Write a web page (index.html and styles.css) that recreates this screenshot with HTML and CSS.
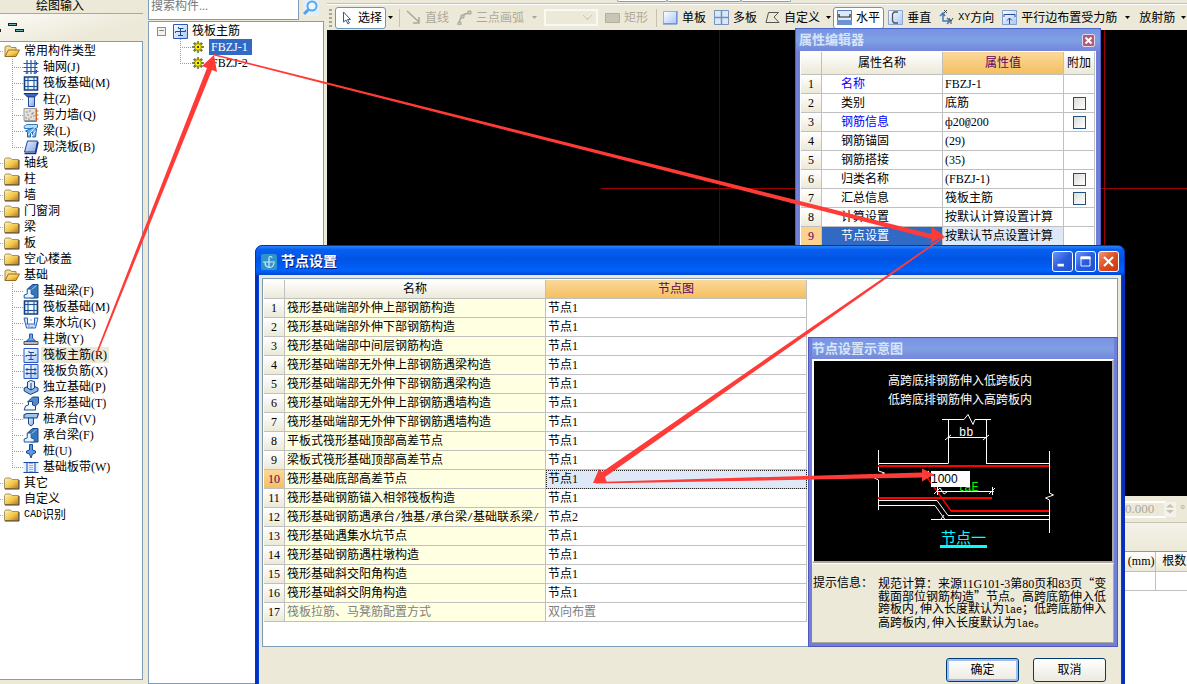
FILE: index.html
```html
<!DOCTYPE html>
<html lang="zh-CN">
<head>
<meta charset="utf-8">
<title>节点设置</title>
<link rel="stylesheet" href="styles.css">
</head>
<body>
<svg class="defs" aria-hidden="true">
  <defs>
    <linearGradient id="gold" x1="0" y1="0" x2="1" y2="1"><stop offset="0" stop-color="#fff3b0"/><stop offset=".55" stop-color="#f3c64a"/><stop offset="1" stop-color="#b87412"/></linearGradient>
    <linearGradient id="steel" x1="0" y1="0" x2="1" y2="1"><stop offset="0" stop-color="#e8f2ff"/><stop offset="1" stop-color="#7fa4e0"/></linearGradient>
    <linearGradient id="sky" x1="0" y1="0" x2="1" y2="1"><stop offset="0" stop-color="#fff"/><stop offset="1" stop-color="#a9c6f8"/></linearGradient>
  </defs>
  <symbol id="folder" viewBox="0 0 16 15"><path d="M.5 12.500V3.500L1.500 2h5l1.500 1.500h6.500v9z" fill="url(#gold)" stroke="#a5946a"/><path d="M1 13h14V4" fill="none" stroke="#493818"/></symbol>
  <symbol id="open" viewBox="0 0 16 15"><path d="M1 12.500V3l1-1h4l1.500 1.500H12V6" fill="#f6dc8c" stroke="#a08a50"/><path d="M1 12.500L4.500 6h11L12 12.500z" fill="url(#gold)" stroke="#9a6a18"/></symbol>
  <symbol id="grid" viewBox="0 0 15 15"><path d="M3.500 0v14M7.500 0v14M11.500 0v14M0 3.500h15M0 7.500h14M0 11.500h15" stroke="#2458a8" stroke-width="1.200"/><path d="M13 2v3M13 10v3M2 13h3M10 13h3" stroke="#2458a8"/></symbol>
  <symbol id="raft" viewBox="0 0 15 15"><path d="M1 1h13v13H1z" fill="#e3effc" stroke="#123f7c" stroke-width="1.600"/><path d="M4.500 1v13M10.500 1v13M1 4.500h13M1 10.500h13" stroke="#1d5392"/><path d="M6 6h3v3H6z" fill="#fff"/></symbol>
  <symbol id="column" viewBox="0 0 15 15"><path d="M.5 1.500h14L11 5H4z" fill="#3e67c4" stroke="#18337e"/><path d="M5 5h6v9.500H5z" fill="url(#steel)" stroke="#25489a"/></symbol>
  <symbol id="wall" viewBox="0 0 15 15"><path d="M.5.5h12v12H.5z" fill="#e4e0dc" stroke="#999"/><path d="M3 4h1M6 3h1M9 5h1M4 7h1M7 9h1M2 10h1M10 8h1M5 11h1M8 6h1" stroke="#444"/><path d="M13 .5v13H1M12 3h3M12 7h3M12 11h3" stroke="#c56b2d" fill="none"/></symbol>
  <symbol id="beam" viewBox="0 0 15 15"><path d="M.5 2.500L3 .500h11v3l-2 1H1z" fill="#b9dcf8" stroke="#2a7cc0"/><path d="M2 7l7-3 4 1-1 8H9V8l-2 1v4H4V8z" fill="#6fb4ea" stroke="#1d68b0"/><path d="M5 11l6-7M8 13l4-6" stroke="#e8f5ff"/></symbol>
  <symbol id="slab" viewBox="0 0 15 15"><path d="M4 1h10l-2 11H1z" fill="url(#steel)" stroke="#1f449c"/><path d="M1 13.500h11L14.500 2" fill="none" stroke="#1a3584" stroke-width="1.600"/></symbol>
  <symbol id="fbeam" viewBox="0 0 15 15"><path d="M4 5l5-4.500h5.500V14H7z" fill="#3677bc" stroke="#134684"/><path d="M.7 14v-3l3-1V5h4v5l3 1v3z" fill="#e6f2ff" stroke="#1d579a"/><path d="M8 5.500L13 1.500" stroke="#9ccaf3"/></symbol>
  <symbol id="strip" viewBox="0 0 15 15"><path d="M4 6l5-5h6v6l-3 3v3z" fill="#518bc9" stroke="#174b88"/><path d="M.7 14L2 10l3-1V5.500h4V9l3 1v4z" fill="#f4f9ff" stroke="#174b88"/></symbol>
  <symbol id="pit" viewBox="0 0 15 15"><path d="M.5 2h3.500v6h7V2h3.500L12 12H3z" fill="#d5e6fb" stroke="#2b62ba"/><path d="M3 8h1M5 10h1M8 11h1M11 9h1M7 4h1" stroke="#173f96"/></symbol>
  <symbol id="pier" viewBox="0 0 15 15"><path d="M6 2h3v4l3 3H3l3-3z" fill="#6ca5e8" stroke="#2559a6"/><path d="M.5 9.500h14v3H.5z" fill="#bbb" stroke="#555"/></symbol>
  <symbol id="main" viewBox="0 0 15 15"><path d="M.5.500h14v14H.5z" fill="url(#sky)" stroke="#2a58c0"/><path d="M2.500 9V7.500h10V6M7.500 7.500V12M5.500 3v1.500h5M7.500 4.500v3M5 11.500h5" fill="none" stroke="#174d9f"/></symbol>
  <symbol id="neg" viewBox="0 0 15 15"><path d="M.5.500h14v14H.5z" fill="url(#sky)" stroke="#2a58c0"/><path d="M7.500 1v13M2 5.500h11M2 9.500h11M3.500 4v3M11.500 4v3M3.500 8v3M11.500 8v3" stroke="#174d9f"/></symbol>
  <symbol id="iso" viewBox="0 0 15 15"><path d="M.7 8L8 5l6.500 3v3L7 14.500.7 11z" fill="#8ab4e4" stroke="#153f78"/><path d="M4 2l3-1.500 4 1V8L7.500 10 4 8z" fill="#d7e9fb" stroke="#173f78"/><path d="M7.500 3v7" stroke="#173f78"/></symbol>
  <symbol id="cap" viewBox="0 0 15 15"><path d="M.5 3L3 1.500h12L13.500 6H.5z" fill="#9fc6ed" stroke="#15508e" stroke-width="1.200"/><path d="M5 6h5v6l-2.500 2L5 12z" fill="url(#steel)" stroke="#15508e"/></symbol>
  <symbol id="pile" viewBox="0 0 15 15"><path d="M6 .500h3V6l3 1v2l-3 1-1.500 4L6 10 3 9V7l3-1z" fill="#6298d8" stroke="#164b91"/></symbol>
  <symbol id="band" viewBox="0 0 15 15"><path d="M0 2h15v11H0z" fill="#e5effd"/><path d="M0 2.500h15M0 12.500h15M3.500 3v9M11.500 3v9" stroke="#174aa0"/><path d="M6.500 3v9M8.500 3v9" stroke="#3e77d0" stroke-dasharray="1 1"/></symbol>
  <symbol id="gear" viewBox="0 0 12 12"><path d="M6 .5v11M.5 6h11M2 2l8 8M10 2l-8 8" stroke="#111" stroke-width="2.200"/><path d="M6 1v10M1 6h10M2.500 2.500l7 7M9.500 2.500l-7 7" stroke="#f5ef00" stroke-width="1.200"/><circle cx="6" cy="6" r="3.300" fill="#f7f000" stroke="#6a6400" stroke-width=".6"/><circle cx="6" cy="6" r="1" fill="#111"/></symbol>
  <symbol id="down" viewBox="0 0 5 3"><path d="M0 0h5L2.500 3z" fill="currentColor"/></symbol>
</svg>

<div class="app">
  <aside class="nav">
    <h2 class="nav-title">绘图输入</h2>
    <div class="nav-tools"><svg width="26" height="12" viewBox="0 0 26 12"><path d="M8 1h9v3H8zM15 7h9v3h-9zM-2 7h3v3h-3z" fill="#222"/><path d="M9 2h7v1H9zM16 8h7v1h-7z" fill="#63b8b5"/></svg></div>
    <ul class="tree">
      <li><svg><use href="#open"/></svg>常用构件类型</li>
      <li class="kid"><svg><use href="#grid"/></svg>轴网(J)</li>
      <li class="kid"><svg><use href="#raft"/></svg>筏板基础(M)</li>
      <li class="kid"><svg><use href="#column"/></svg>柱(Z)</li>
      <li class="kid"><svg><use href="#wall"/></svg>剪力墙(Q)</li>
      <li class="kid"><svg><use href="#beam"/></svg>梁(L)</li>
      <li class="kid last"><svg><use href="#slab"/></svg>现浇板(B)</li>
      <li><svg><use href="#folder"/></svg>轴线</li>
      <li><svg><use href="#folder"/></svg>柱</li>
      <li><svg><use href="#folder"/></svg>墙</li>
      <li><svg><use href="#folder"/></svg>门窗洞</li>
      <li><svg><use href="#folder"/></svg>梁</li>
      <li><svg><use href="#folder"/></svg>板</li>
      <li><svg><use href="#folder"/></svg>空心楼盖</li>
      <li><svg><use href="#open"/></svg>基础</li>
      <li class="kid"><svg><use href="#fbeam"/></svg>基础梁(F)</li>
      <li class="kid"><svg><use href="#raft"/></svg>筏板基础(M)</li>
      <li class="kid"><svg><use href="#pit"/></svg>集水坑(K)</li>
      <li class="kid"><svg><use href="#pier"/></svg>柱墩(Y)</li>
      <li class="kid"><svg><use href="#main"/></svg><span class="current">筏板主筋(R)</span></li>
      <li class="kid"><svg><use href="#neg"/></svg>筏板负筋(X)</li>
      <li class="kid"><svg><use href="#iso"/></svg>独立基础(P)</li>
      <li class="kid"><svg><use href="#strip"/></svg>条形基础(T)</li>
      <li class="kid"><svg><use href="#cap"/></svg>桩承台(V)</li>
      <li class="kid"><svg><use href="#fbeam"/></svg>承台梁(F)</li>
      <li class="kid"><svg><use href="#pile"/></svg>桩(U)</li>
      <li class="kid last"><svg><use href="#band"/></svg>基础板带(W)</li>
      <li><svg><use href="#folder"/></svg>其它</li>
      <li><svg><use href="#folder"/></svg>自定义</li>
      <li><svg><use href="#folder"/></svg><span class="half">CAD</span>识别</li>
    </ul>
  </aside>

  <section class="members">
    <div class="search">
      <input type="text" placeholder="搜索构件..." aria-label="搜索构件">
      <button type="button" aria-label="搜索"><svg width="16" height="16" viewBox="0 0 16 16"><path d="M6 9l-5 5" stroke="#5b9fe0" stroke-width="3"/><circle cx="9" cy="6" r="4.500" fill="#e8f6ff" stroke="#5aa7ea" stroke-width="2"/></svg></button>
    </div>
    <ul class="member-tree">
      <li><span class="minus">−</span><svg><use href="#main"/></svg>筏板主筋</li>
      <li class="leaf"><svg><use href="#gear"/></svg><span class="picked">FBZJ-1</span></li>
      <li class="leaf last"><svg><use href="#gear"/></svg><span>FBZJ-2</span></li>
    </ul>
  </section>

  <main class="work">
    <div class="upper-bar"><span></span><span></span><span></span></div>
    <div class="toolbar">
      <i class="grip"></i>
      <button type="button" class="on"><svg class="ic" viewBox="0 0 15 15"><path d="M4.500 2v10l2.500-2 2 4 1.500-1-2-3.500h3z" fill="#fff" stroke="#345a9a"/></svg>选择</button><svg class="dd"><use href="#down"/></svg>
      <i class="sep"></i>
      <button type="button" disabled><svg class="ic" viewBox="0 0 15 15"><path d="M1 1l12 11M13 7v6H7" fill="none" stroke="#aaa79a" stroke-width="1.500"/></svg>直线</button>
      <button type="button" disabled><svg class="ic" viewBox="0 0 15 15"><path d="M2 14C3 7 6 3 13 3" fill="none" stroke="#aaa79a" stroke-width="1.500"/><path d="M1 12h3v3H1zM4 5h3v3H4zM11 1h3v3h-3z" fill="#ccc9bb" stroke="#aaa79a"/></svg>三点画弧</button><svg class="dd off"><use href="#down"/></svg>
      <select disabled aria-label="画弧方式"><option></option></select>
      <button type="button" disabled><svg class="ic" viewBox="0 0 15 15"><path d="M.5 3.500h14v9H.5z" fill="#c8c5b5" stroke="#b3b0a2"/></svg>矩形</button>
      <i class="sep"></i>
      <button type="button"><svg class="ic" viewBox="0 0 15 15"><path d="M.5 1.500h13v12H.5z" fill="url(#sky)" stroke="#90b0ee"/><path d="M0 14h14V1" fill="none" stroke="#567cc8"/></svg>单板</button>
      <button type="button"><svg class="ic" viewBox="0 0 15 15"><path d="M.5.500h14v14H.5z" fill="#dbe8fa" stroke="#7794bf"/><path d="M7.500 1v13M1 7.500h13" stroke="#6f8fc0" stroke-width="1.500"/></svg>多板</button>
      <button type="button"><svg class="ic" viewBox="0 0 15 15"><path d="M1 12.500L3.500 2.500h10L9 7l5 5.500z" fill="none" stroke="#555"/></svg>自定义</button><svg class="dd"><use href="#down"/></svg>
      <button type="button" class="on"><svg class="ic" viewBox="0 0 15 15"><path d="M.5.500h14v14H.5z" fill="#dce9fb" stroke="#567db8"/><path d="M0 10h15v5H0z" fill="#6d93cf"/><path d="M2 4v3h11V4" fill="none" stroke="#222" stroke-width="1.200"/></svg>水平</button>
      <button type="button"><svg class="ic" viewBox="0 0 15 15"><path d="M.5.500h14v14H.5z" fill="url(#sky)" stroke="#8ba6cf"/><path d="M10 2H6L4.500 4v7L6 13h4" fill="none" stroke="#555" stroke-width="1.300"/></svg>垂直</button>
      <button type="button"><svg class="ic" viewBox="0 0 15 15"><path d="M4 4v7h7M1 6l3-3 2 3M8 8l3 3-3 3" fill="none" stroke="#4777c4" stroke-width="1.500"/><path d="M5 0l3 3M8 0L5 3M10 8l2 3 2-3M12 11v3" stroke="#444" fill="none"/></svg><span class="half">XY</span>方向</button>
      <button type="button"><svg class="ic" viewBox="0 0 15 15"><path d="M.5.500h14v14H.5z" fill="url(#sky)" stroke="#83a1d2"/><path d="M2 7V4.500h11V7M7.500 14V8M5 10.500L7.500 8l2.500 2.500" fill="none" stroke="#284c91"/></svg>平行边布置受力筋</button><svg class="dd wide"><use href="#down"/></svg>
      <button type="button">放射筋</button><svg class="dd"><use href="#down"/></svg>
    </div>
    <div class="canvas"><i class="axis-h"></i><i class="axis-v dim"></i><i class="axis-v"></i></div>
    <div class="status"><input type="text" value="0.000" disabled aria-label="旋转角度"><span class="spin"><svg viewBox="0 0 9 4"><path d="M0 4h9L4.500 0z"/></svg><svg viewBox="0 0 9 4"><path d="M0 0h9L4.500 4z"/></svg></span>°</div>
    <div class="strip"></div>
    <div class="sheet">
      <table><tr><th>(mm)</th><th>根数</th></tr><tr><td></td><td></td></tr></table>
    </div>
  </main>
</div>

<section class="props">
  <header><h2>属性编辑器</h2><button type="button" aria-label="关闭"><svg viewBox="0 0 11 11"><path d="M2.500 2.500l6 6M8.500 2.500l-6 6" stroke="#fff" stroke-width="2"/></svg></button></header>
  <div class="props-body">
    <table class="sheet-table">
      <colgroup><col class="c-no"><col class="c-attr"><col class="c-attr"><col class="c-add"></colgroup>
      <tr class="tall"><th></th><th>属性名称</th><th class="hot">属性值</th><th>附加</th></tr>
      <tr><th>1</th><td class="link">名称</td><td>FBZJ-1</td><td></td></tr>
      <tr><th>2</th><td>类别</td><td>底筋</td><td><input type="checkbox" aria-label="附加类别"></td></tr>
      <tr><th>3</th><td class="link">钢筋信息</td><td>ф20<span class="half">@</span>200</td><td><input type="checkbox" aria-label="附加钢筋信息"></td></tr>
      <tr><th>4</th><td>钢筋锚固</td><td>(29)</td><td></td></tr>
      <tr><th>5</th><td>钢筋搭接</td><td>(35)</td><td></td></tr>
      <tr><th>6</th><td>归类名称</td><td>(FBZJ-1)</td><td><input type="checkbox" aria-label="附加归类名称"></td></tr>
      <tr><th>7</th><td>汇总信息</td><td>筏板主筋</td><td><input type="checkbox" aria-label="附加汇总信息"></td></tr>
      <tr><th>8</th><td>计算设置</td><td>按默认计算设置计算</td><td></td></tr>
      <tr class="sel"><th class="hot">9</th><td>节点设置</td><td>按默认节点设置计算</td><td></td></tr>
    </table>
  </div>
</section>

<section class="dialog" role="dialog" aria-labelledby="dlg-title">
  <header>
    <svg class="logo" viewBox="0 0 16 16"><rect width="16" height="16" rx="2" fill="#2f94c9"/><path d="M8 14V4c0-2 3-2 3 0M2 8h12M4 8c0 7 8 7 9 1" fill="none" stroke="#cdeaf5" stroke-width="1.200"/></svg>
    <h1 id="dlg-title">节点设置</h1>
    <button type="button" aria-label="最小化"><svg viewBox="0 0 21 21"><path d="M5 13h7v3H5z" fill="#fff"/></svg></button>
    <button type="button" aria-label="最大化"><svg viewBox="0 0 21 21"><path d="M5.500 5.500h10v10h-10z" fill="none" stroke="#fff"/><path d="M5 5h11v3H5z" fill="#fff"/></svg></button>
    <button type="button" class="shut" aria-label="关闭"><svg viewBox="0 0 21 21"><path d="M5.500 5.500l10 10M15.500 5.500l-10 10" stroke="#fff" stroke-width="2.400"/></svg></button>
  </header>
  <div class="dialog-body">
    <div class="panel">
      <table class="sheet-table nodes">
        <colgroup><col class="c-no"><col class="c-node"><col class="c-node"></colgroup>
        <tr><th></th><th>名称</th><th class="hot">节点图</th></tr>
        <tr><th>1</th><td>筏形基础端部外伸上部钢筋构造</td><td>节点1</td></tr>
        <tr><th>2</th><td>筏形基础端部外伸下部钢筋构造</td><td>节点1</td></tr>
        <tr><th>3</th><td>筏形基础端部中间层钢筋构造</td><td>节点1</td></tr>
        <tr><th>4</th><td>筏形基础端部无外伸上部钢筋遇梁构造</td><td>节点1</td></tr>
        <tr><th>5</th><td>筏形基础端部无外伸下部钢筋遇梁构造</td><td>节点1</td></tr>
        <tr><th>6</th><td>筏形基础端部无外伸上部钢筋遇墙构造</td><td>节点1</td></tr>
        <tr><th>7</th><td>筏形基础端部无外伸下部钢筋遇墙构造</td><td>节点1</td></tr>
        <tr><th>8</th><td>平板式筏形基础顶部高差节点</td><td>节点1</td></tr>
        <tr><th>9</th><td>梁板式筏形基础顶部高差节点</td><td>节点1</td></tr>
        <tr><th class="hot">10</th><td>筏形基础底部高差节点</td><td class="focus">节点1</td></tr>
        <tr><th>11</th><td>筏形基础钢筋锚入相邻筏板构造</td><td>节点1</td></tr>
        <tr><th>12</th><td>筏形基础钢筋遇承台<span class="half">/</span>独基<span class="half">/</span>承台梁<span class="half">/</span>基础联系梁<span class="half">/</span></td><td>节点2</td></tr>
        <tr><th>13</th><td>筏形基础遇集水坑节点</td><td>节点1</td></tr>
        <tr><th>14</th><td>筏形基础钢筋遇柱墩构造</td><td>节点1</td></tr>
        <tr><th>15</th><td>筏形基础斜交阳角构造</td><td>节点1</td></tr>
        <tr><th>16</th><td>筏形基础斜交阴角构造</td><td>节点1</td></tr>
        <tr class="muted"><th>17</th><td>筏板拉筋、马凳筋配置方式</td><td>双向布置</td></tr>
      </table>
      <section class="preview">
        <h2>节点设置示意图</h2>
        <div class="figure">
          <svg viewBox="814 361 298 200" fill="none" stroke="#fff">
            <g fill="#fff" stroke="none" class="note"><text x="888" y="385">高跨底排钢筋伸入低跨板内</text><text x="888" y="404">低跨底排钢筋伸入高跨板内</text></g>
            <path d="M942 419.500h22l4-5 5 10 2-5h16M948.500 419v44.500M986.500 419v44.500M948 437.500h38M945 440l6-5M983 440l6-5"/>
            <text class="bb" x="959" y="436" fill="#fff" stroke="none">bb</text>
            <path d="M878.500 450v21l6 2-10 5 4 2v30M1049.500 451v42l4 2-8 3 4 2v33M878 463.500h70M986 463.500h63"/>
            <path d="M878 466h171M878 498h114" stroke="red" stroke-width="2"/>
            <path d="M927 477l24 34" stroke="red" stroke-width="1.500"/><path d="M951 511h98" stroke="red" stroke-width="2"/>
            <path d="M878 500.500h59l11 15h101M878 505.500h57l10 14M931 519.500h118M941 519l3-4"/>
            <path d="M937 491.500h57M937.500 487v8M992.500 487v8M934 494l6-6M989 494l6-6M940 488l4 6 3-2M925 474l4-3"/>
            <text class="bb" x="957" y="491" fill="#0f0" stroke="none">laE</text>
            <text class="caption" x="941" y="543" fill="#0ff" stroke="none">节点一</text>
            <path d="M940 546.500h47" stroke="#0ff" stroke-width="3"/>
          </svg>
          <input type="text" value="1000" aria-label="伸入长度">
        </div>
        <div class="hint"><span>提示信息：</span><p>规范计算：来源11G101-3第80页和83页<span class="full">“</span>变<br>截面部位钢筋构造<span class="full">”</span>节点。高跨底筋伸入低<br>跨板内<span class="half">,</span>伸入长度默认为<span class="half">lae</span>；低跨底筋伸入<br>高跨板内<span class="half">,</span>伸入长度默认为<span class="half">lae</span>。</p></div>
      </section>
    </div>
    <footer><button type="button" class="primary">确定</button><button type="button">取消</button></footer>
  </div>
</section>

<svg class="arrows" width="1187" height="684" viewBox="0 0 1187 684" fill="#ff3b38" aria-hidden="true">
  <path d="M96 353l1.500 .5L212 70l5 2-3-17-12 11 5 2z"/>
  <path d="M214 54v1.500L932 239l-2 4 14-7-12-9-1 7z"/>
  <path d="M945 237l-1-1L602 472l-3-3-6 14 14 0-2-6z"/>
  <path d="M596 482v1.500l326-6v4l12-7-12-6v4z"/>
</svg>
</body>
</html>
```
FILE: styles.css
```css
* { box-sizing: border-box; }
html, body { height: 100%; }
body {
  margin: 0;
  position: relative;
  overflow: hidden;
  background: #ece9d8;
  color: #000;
  font: 12px/16px "Liberation Serif", "Noto Sans CJK SC", serif;
}
button, input, select { font: inherit; color: inherit; margin: 0; }
h1, h2, p, ul { margin: 0; padding: 0; list-style: none; }
th { font-weight: normal; }
.defs { position: absolute; width: 0; height: 0; }
.half { font: 10px/12px "Liberation Mono", monospace; }
.full { font-family: "Noto Sans CJK SC", sans-serif; }

.app { display: flex; height: 100%; }

/* component type tree */
.nav { flex: 0 0 143px; display: flex; flex-direction: column; padding-bottom: 4px; }
.nav-title { height: 14px; border-bottom: 1px solid #aca899; padding-left: 36px; font-size: 12px; font-weight: normal; line-height: 12px; }
.nav-tools { height: 27px; padding: 8px 0 0; background: linear-gradient(165deg, #fbfaf5, #ece9d8 70%); }
.nav-tools svg { display: block; }
.tree { flex: 1; background: #fff; border: 1px solid #7f9db9; border-left: 0; padding-top: 1px; }
.tree li { display: flex; align-items: center; height: 16px; white-space: nowrap; }
.tree li::before {
  content: ""; width: 3px; height: 16px; margin-right: 1px;
  background: repeating-linear-gradient(90deg, #aaa 0 1px, transparent 1px 2px) 0 8px / 100% 1px no-repeat;
}
.tree svg { width: 16px; height: 15px; margin-right: 4px; }
.tree .kid::before, .leaf::before {
  content: ""; width: 11px; height: 16px; margin: 0 0 0 12px;
  background:
    repeating-linear-gradient(90deg, #999 0 1px, transparent 1px 2px) 0 8px / 100% 1px no-repeat,
    repeating-linear-gradient(180deg, #999 0 1px, transparent 1px 2px) 0 0 / 1px 100% no-repeat;
}
.tree .last::before, .leaf.last::before { background-size: 100% 1px, 1px 8px; }
.current { background: #ece9d8; padding: 0 2px; margin-left: -2px; }

/* member list */
.members { flex: 0 0 176px; margin: 0 3px 0 5px; display: flex; flex-direction: column; }
.search { display: flex; height: 21px; align-items: flex-start; }
.search input { width: 151px; height: 20px; border: 1px solid #7f9db9; border-top: 0; background: #fff; padding: 0 2px 6px; }
.search input::placeholder { color: #777; opacity: 1; }
.search button { border: 0; padding: 0; margin-left: 4px; background: #e4eefb; height: 16px; }
.search button svg { display: block; }
.member-tree { flex: 1; background: #fff; border: 1px solid #7f9db9; padding: 1px 0 0 8px; }
.member-tree li { display: flex; align-items: center; height: 16px; }
.member-tree svg { width: 15px; height: 15px; margin-right: 4px; }
.minus { width: 9px; height: 9px; border: 1px solid #7f8ea5; background: #f4f2ea; font-size: 10px; line-height: 6px; text-align: center; margin-right: 7px; }
.member-tree .leaf::before { margin-left: 23px; width: 12px; }
.member-tree .leaf svg { width: 12px; height: 12px; margin-right: 5px; }
.leaf span { padding: 0 2px; }
.picked { background: #316ac5; color: #fff; width: 43px; }

/* drawing area */
.work { flex: 1; min-width: 0; display: flex; flex-direction: column; }
.upper-bar { height: 4px; display: flex; padding-left: 290px; border-bottom: 1px solid #c5c2b2; }
.upper-bar span { width: 50px; height: 2px; border: 1px solid #7f9db9; border-top: 0; border-radius: 0 0 3px 3px; background: #fff; }
.upper-bar span:nth-child(2) { width: 74px; }
.toolbar { height: 26px; display: flex; align-items: center; overflow: hidden; white-space: nowrap; border-top: 1px solid #fff; }
.toolbar > * { flex: none; }
.toolbar button { display: flex; align-items: center; border: 1px solid transparent; background: none; height: 22px; padding: 0 3px; border-radius: 3px; }
.toolbar button:disabled { color: #aca899; }
.toolbar .on { background: #fff; border-color: #6d95b8; }
.ic { width: 15px; height: 15px; margin-right: 4px; }
.dd { width: 5px; height: 3px; margin: 0 2px; }
.off { color: #aca899; margin: 0 7px 0 4px; }
.wide { margin: 0 5px 0 4px; }
.grip { width: 3px; height: 18px; margin: 0 3px 0 2px; background: repeating-linear-gradient(#aaa694 0 2px, transparent 2px 4px); }
.sep { width: 1px; height: 18px; background: #c5c2b2; margin: 0 2px 0 4px; }
.toolbar select { appearance: none; width: 54px; height: 17px; border: 2px solid #fff; border-radius: 0; margin-right: 3px;
  background: linear-gradient(45deg, transparent 42%, #bbb8a8 42% 60%, transparent 60%) 37px 4px / 5px 5px no-repeat, linear-gradient(-45deg, transparent 42%, #bbb8a8 42% 60%, transparent 60%) 41px 4px / 5px 5px no-repeat, #ece9d8; }
.canvas { flex: 1; position: relative; background: #000; }
.axis-h, .axis-v { position: absolute; background: #900; }
.axis-h { left: 274px; right: 0; top: 158px; height: 1px; }
.axis-v { left: 777px; top: 0; bottom: 0; width: 1px; }
.dim { left: 392px; background: #500; }
.status { height: 27px; display: flex; align-items: center; justify-content: flex-end; padding-right: 2px; color: #aca899; border-bottom: 1px solid #c5c2b2; }
.status input { width: 56px; height: 17px; border: 2px solid #fff; background: #ece9d8; color: #aca899; padding: 0 10px 0 0; text-align: right; font-size: 13px; }
.spin { width: 12px; height: 15px; margin: 0 4px 0 -2px; display: flex; flex-direction: column; justify-content: space-around; background: #f4f2ea; padding: 1px 2px; }
.spin svg { fill: #c5c2b2; display: block; }
.strip { height: 29px; background: linear-gradient(#f4f2ea, #ece9d8); border-bottom: 1px solid #7f9db9; }
.sheet { height: 132px; background: #fff; display: flex; justify-content: flex-end; align-items: flex-start; }
.sheet table { border-collapse: collapse; }
.sheet th, .sheet td { height: 19px; padding: 1px 0 1px 6px; border-bottom: 1px solid #c0c0c0; border-left: 1px solid #c0c0c0; width: 32px; }
.sheet th { background: linear-gradient(#fff, #ece9d8); }

/* shared grid */
.sheet-table { table-layout: fixed; border-collapse: separate; border-spacing: 0; }
.sheet-table th, .sheet-table td { height: 19px; padding: 0; line-height: 18px; border-right: 1px solid #c0c0c0; border-bottom: 1px solid #c0c0c0; overflow: hidden; white-space: nowrap; }
.sheet-table th { background: linear-gradient(#fff, #ece9d8); text-align: center; }
.sheet-table td { padding-left: 2px; background: #fff; }
.sheet-table th.hot { background: linear-gradient(#fbd89a, #f4c060); color: #600060; }
.sheet-table td + td .half { line-height: 12px; }
.c-no { width: 21px; }
.c-attr { width: 121px; }
.c-add { width: 31px; }
.c-node { width: 261px; }

/* property window */
.props { position: absolute; left: 795px; top: 28px; width: 306px; background: #7080d8; border: 1px solid #5560c0; border-top-color: #4a68c8; padding: 0 4px 4px; }
.props header { height: 22px; display: flex; align-items: center; justify-content: space-between; margin: 0 -4px; padding: 0 5px 0 3px; background: linear-gradient(#7a92e4, #7fa0e4 50%, #7486da); }
.props h2, .preview h2 { font-size: 13px; font-weight: bold; color: #d8e4f8; }
.props header button { width: 13px; height: 13px; padding: 0; border: 1px solid #e4d8ea; border-radius: 2px; background: #b05c78; }
.props header svg { display: block; }
.props-body { background: #fff; padding: 1px; }
.props .sheet-table { width: 294px; }
.props .tall th { height: 23px; }
.props td:nth-child(2) { padding-left: 19px; }
.props td:nth-child(4) { padding: 0; text-align: center; }
.props .link { color: #00f; }
.props .sel td:nth-child(2) { background: #316ac5; color: #fff; }
.props .sel td:nth-child(3) { background: #dfe8f6; }
.props .sel th { background: #fdd28c; }
.props input { appearance: none; display: block; width: 13px; height: 13px; margin: 0 auto; border: 1px solid #1c5180; background: linear-gradient(135deg, #dcdcd7, #fff); }

/* node dialog */
.dialog { position: absolute; left: 255px; top: 245px; bottom: -8px; width: 870px; display: flex; flex-direction: column; background: #0640d8; border-radius: 7px 7px 0 0; border: 1px solid #0a30b8; padding: 0 3px; box-shadow: inset 2px 0 #0030c0, inset -2px 0 #0030c0; }
.dialog > header { height: 29px; flex: none; display: flex; align-items: center; gap: 2px; margin: 0 -3px; padding: 2px 5px 0; border-radius: 6px 6px 0 0; background: linear-gradient(#2a84fa, #0860f0 12%, #0054e3 45%, #0062fc 85%, #0046d0); }
.dialog h1 { flex: 1; font-size: 14px; line-height: 20px; font-weight: bold; color: #fff; text-shadow: 1px 1px #0a1883; }
.logo { width: 16px; height: 16px; margin-right: 2px; }
.dialog > header button { width: 21px; height: 21px; padding: 0; border: 1px solid #fff; border-radius: 3px; background: linear-gradient(135deg, #6e96f4, #2a5ce0 50%, #2050d0); }
.dialog > header button svg { display: block; width: 19px; height: 19px; }
.dialog > header .shut { background: linear-gradient(135deg, #f09878, #e04c20 50%, #c83810); }
.dialog-body { flex: 1; background: #ece9d8; padding: 3px 3px 0; }
.panel { display: flex; justify-content: space-between; align-items: flex-start; background: #fff; border: 1px solid #7f9db9; }
.nodes { width: 543px; margin: 1px; }
.nodes td:nth-child(2) { background: #ffffe1; }
.nodes td.focus { background: #dfe8f6; outline: 1px dotted #222; outline-offset: -1px; }
.nodes .muted td { color: #808080; }
.preview { width: 310px; margin: 58px -1px -1px 0; border: 4px solid #7080d8; border-top: 1px solid #5570c8; outline: 1px solid #5058c0; outline-offset: -1px; background: #ece9d8; }
.preview h2 { height: 21px; line-height: 22px; background: linear-gradient(#7a92e4, #7fa0e4 50%, #7486da); }
.figure { position: relative; background: #000; border: 2px solid #fff; border-right-color: #aca899; border-bottom-color: #aca899; }
.figure svg { display: block; width: 100%; }
.figure input { position: absolute; left: 117px; top: 110px; width: 39px; height: 16px; border: 0; padding: 0; background: #fff; font: 12px/16px "Liberation Sans", sans-serif; }
.note { font-size: 12px; }
.bb { font: 12px "Liberation Mono", monospace; }
.caption { font-size: 15px; }
.hint { height: 80px; display: flex; line-height: 12px; padding: 13px 0 0 1px; border: 1px solid #fff; border-left-width: 0; border-right-color: #aca899; border-bottom-color: #aca899; white-space: nowrap; }
.hint > span { width: 65px; }
.dialog footer { display: flex; justify-content: flex-end; gap: 14px; padding: 11px 12px 0; }
.dialog footer button { width: 73px; height: 24px; border: 1px solid #003c74; border-radius: 3px; padding: 0; background: linear-gradient(#fff, #ece9e0); }
.dialog footer .primary { box-shadow: inset 0 0 0 2px #a0bdf0; }

/* guide arrows over everything */
.arrows { position: absolute; left: 0; top: 0; pointer-events: none; }
```
